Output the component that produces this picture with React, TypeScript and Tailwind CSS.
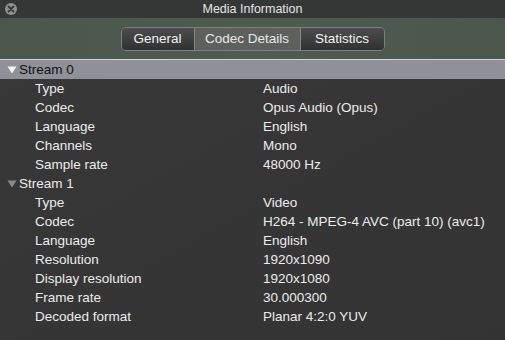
import React from 'react';

type Row = [string, string];

const streams: { name: string; rows: Row[]; selected?: boolean }[] = [
  {
    name: 'Stream 0',
    selected: true,
    rows: [
      ['Type', 'Audio'],
      ['Codec', 'Opus Audio (Opus)'],
      ['Language', 'English'],
      ['Channels', 'Mono'],
      ['Sample rate', '48000 Hz'],
    ],
  },
  {
    name: 'Stream 1',
    rows: [
      ['Type', 'Video'],
      ['Codec', 'H264 - MPEG-4 AVC (part 10) (avc1)'],
      ['Language', 'English'],
      ['Resolution', '1920x1090'],
      ['Display resolution', '1920x1080'],
      ['Frame rate', '30.000300'],
      ['Decoded format', 'Planar 4:2:0 YUV'],
    ],
  },
];

const Triangle = ({ dark }: { dark?: boolean }) => (
  <svg width="10" height="8" viewBox="0 0 10 8" className="mr-[1px]">
    <path d="M0.5 0.5 H9.5 L5 7.5 Z" fill={dark ? '#f4f4f4' : '#8a8a8a'} />
  </svg>
);

export default function App() {
  return (
    <div className="w-[505px] h-[340px] overflow-hidden flex flex-col bg-[#363636] font-['Liberation_Sans',Arial,sans-serif] text-[13.5px] text-[#ececec]">
      <div className="h-[18px] bg-[#333836] flex items-center relative">
        <div className="absolute left-[5px] top-[3px] w-[12px] h-[12px] rounded-full bg-[#8d908f] flex items-center justify-center">
          <svg width="8" height="8" viewBox="0 0 8 8">
            <path d="M1.5 1.5 L6.5 6.5 M6.5 1.5 L1.5 6.5" stroke="#333836" strokeWidth="1.8" strokeLinecap="round" />
          </svg>
        </div>
        <div className="flex-1 text-center text-[12.5px] text-[#e4e4e4]">Media Information</div>
      </div>
      <div className="h-[42px] bg-gradient-to-r from-[#4b564c] via-[#4f5b51] to-[#4b574c] flex items-center justify-center border-b border-[#cfd2cf]">
        <div className="flex h-[24px] mt-[1px] rounded-[5px] border border-[#7c817d] overflow-hidden text-[13.5px]">
          <div className="w-[72px] flex items-center justify-center bg-gradient-to-b from-[#4b4e4d] to-[#2f3231] text-[#f2f2f2]">General</div>
          <div className="w-[107px] flex items-center justify-center bg-[#5c615e] border-x border-[#838884] text-[#e8e8e8]">Codec Details</div>
          <div className="w-[83px] flex items-center justify-center bg-gradient-to-b from-[#4b4e4d] to-[#2f3231] text-[#f2f2f2]">Statistics</div>
        </div>
      </div>
      <div className="flex-1 bg-gradient-to-br from-[#383838] to-[#333333]">
        {streams.map((s) => (
          <div key={s.name}>
            <div className={`h-[19px] flex items-center pl-[7px] pt-[1px] ${s.selected ? 'bg-[#8e9198] text-[#111]' : ''}`}>
              <Triangle dark={s.selected} />
              <span className="ml-[1px]">{s.name}</span>
            </div>
            {s.rows.map(([k, v]) => (
              <div key={k} className="h-[19px] flex items-center pt-[1px]">
                <span className="w-[263px] pl-[35px]">{k}</span>
                <span>{v}</span>
              </div>
            ))}
          </div>
        ))}
      </div>
    </div>
  );
}
